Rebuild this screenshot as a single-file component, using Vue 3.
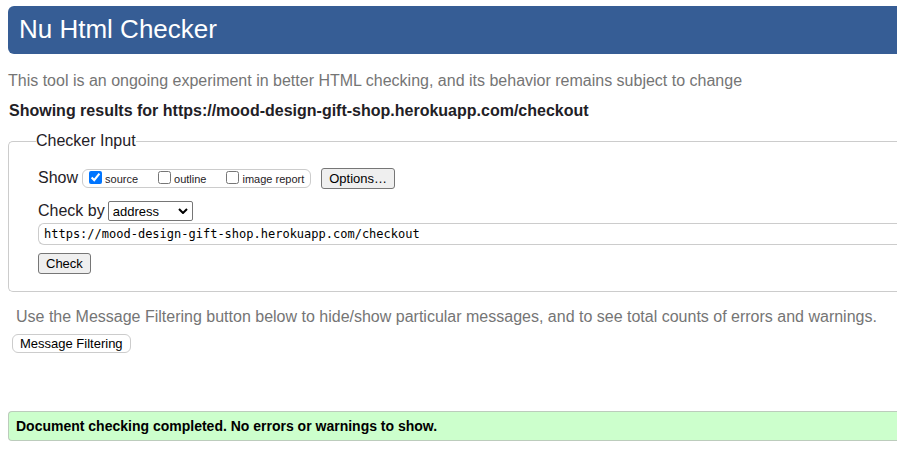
<script setup>
import { ref } from 'vue'

const views = ref([
  { id: 'source', label: 'source', on: true },
  { id: 'outline', label: 'outline', on: false },
  { id: 'image-report', label: 'image report', on: false },
])
const method = ref('address')
const address = ref('https://mood-design-gift-shop.herokuapp.com/checkout')
</script>

<template>
  <div class="page">
    <header class="banner">
      <h1>Nu Html Checker</h1>
    </header>
    <main>
      <p class="about">This tool is an ongoing experiment in better HTML checking, and its behavior remains subject to change</p>
      <h2>Showing results for https://mood-design-gift-shop.herokuapp.com/checkout</h2>

      <form @submit.prevent>
        <fieldset>
          <legend>Checker Input</legend>
          <div class="row show">
            <span>Show</span>
            <div class="views">
              <label v-for="view in views" :key="view.id" :for="view.id">
                <input :id="view.id" v-model="view.on" type="checkbox" />
                <span>{{ view.label }}</span>
              </label>
            </div>
            <button type="button" class="options">Options…</button>
          </div>
          <div class="row">
            <label for="method">Check by</label>
            <div class="picker">
              <select id="method" v-model="method">
                <option value="address">address</option>
                <option value="upload">file upload</option>
                <option value="text">text input</option>
              </select>
              <svg viewBox="0 0 10 6" aria-hidden="true"><path d="M1 1l4 4 4-4" /></svg>
            </div>
          </div>
          <input v-model="address" class="address" type="text" aria-label="Address" spellcheck="false" />
          <button type="submit" class="check">Check</button>
        </fieldset>
      </form>

      <p class="hint">Use the Message Filtering button below to hide/show particular messages, and to see total counts of errors and warnings.</p>
      <button type="button" class="filter">Message Filtering</button>
      <p class="success">Document checking completed. No errors or warnings to show.</p>
    </main>
  </div>
</template>

<style>
body {
  margin: 0;
  background: #fff;
}
</style>

<style scoped>
.page {
  padding: 6px 0 14px 8px;
  font: 16px/20px "Liberation Sans", Arial, sans-serif;
  color: #1f2126;
}
h1, h2, p {
  margin: 0;
}
.banner {
  padding: 8px 11px 10px;
  border-radius: 6px 0 0 6px;
  background: #365d95;
  color: #fff;
}
h1 {
  font-size: 26px;
  line-height: 30px;
  font-weight: 400;
}
.about {
  margin-top: 17px;
  color: #757575;
}
h2 {
  margin-top: 10px;
  padding-left: 1px;
  font-size: 16px;
}
fieldset {
  margin: 10px 0 0;
  padding: 16px 0 17px 29px;
  min-width: 0;
  border: 1px solid #ccc;
  border-right: 0;
  border-radius: 5px 0 0 5px;
}
legend {
  margin-left: -2px;
  padding: 0;
}
.row {
  display: flex;
  align-items: center;
  gap: 3px;
  height: 20px;
}
.show {
  gap: 4px;
  height: 22px;
  margin-bottom: 12px;
}
.views {
  display: flex;
  gap: 20px;
  box-sizing: border-box;
  height: 19px;
  padding: 0 6px;
  border: 1px solid #ccc;
  border-radius: 6px;
  font-size: 11px;
  line-height: 19px;
}
.views label {
  display: flex;
  gap: 3px;
}
.views input {
  width: 13px;
  height: 13px;
  margin: 1px 0 0;
  accent-color: #0075ff;
}
button, select {
  box-sizing: border-box;
  font: 13px/15px "Liberation Sans", Arial, sans-serif;
  color: #000;
}
.options, .check {
  height: 21px;
  padding: 0 7px;
  border: 1px solid #767676;
  border-radius: 3px;
  background: #efefef;
}
.options {
  margin-left: 6px;
}
.picker {
  display: grid;
  align-items: center;
}
.picker > * {
  grid-area: 1 / 1;
}
select {
  width: 85px;
  height: 20px;
  padding: 0 4px;
  border: 1px solid #767676;
  border-radius: 2px;
  background: #fff;
  appearance: none;
}
.picker svg {
  justify-self: end;
  width: 10px;
  height: 6px;
  margin-right: 5px;
  fill: none;
  stroke: #000;
  stroke-width: 2;
  pointer-events: none;
}
.address {
  display: block;
  box-sizing: border-box;
  width: 100%;
  height: 22px;
  margin: 2px 0 8px;
  padding: 0 5px;
  border: 1px solid #ccc;
  border-right: 0;
  border-radius: 6px 0 0 6px;
  font: 12px "DejaVu Sans Mono", monospace;
  color: #000;
}
.check {
  display: block;
}
.hint {
  margin: 15px 0 7px;
  padding-left: 8px;
  color: #757575;
}
.filter {
  display: block;
  height: 19px;
  margin-left: 4px;
  padding: 0 7px;
  border: 1px solid #ccc;
  border-radius: 6px;
  background: #fff;
}
.success {
  margin-top: 58px;
  padding: 4px 7px;
  border: 1px solid #bcccbc;
  border-right: 0;
  border-radius: 4px 0 0 4px;
  background: #cfc;
  font-size: 14px;
  font-weight: 700;
  color: #000;
}
</style>
